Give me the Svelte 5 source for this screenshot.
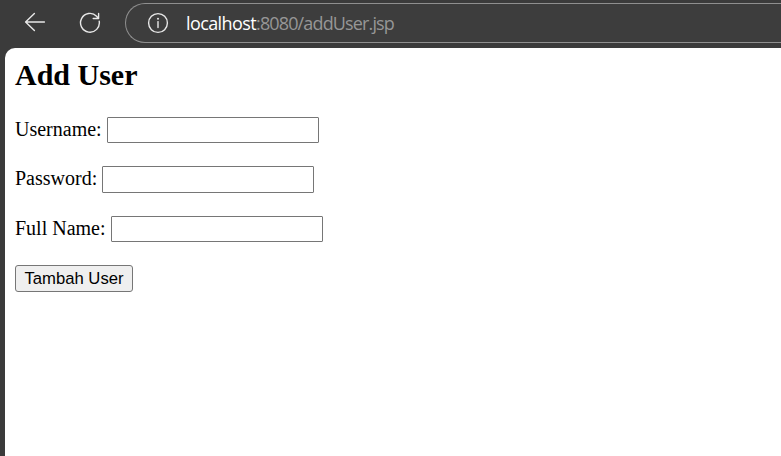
<script>
  const fields = [
    { id: 'username', label: 'Username:', type: 'text', height: 26, gap: 23 },
    { id: 'password', label: 'Password:', type: 'password', height: 27, gap: 23 },
    { id: 'fullname', label: 'Full Name:', type: 'text', height: 26, gap: 23 }
  ];
</script>

<div class="browser">
  <header class="toolbar">
    <svg class="back" width="22" height="20" viewBox="0 0 22 20" aria-label="Back">
      <path d="M10.4 1.6 1.6 10l8.8 8.4M1.8 10H20.4" />
    </svg>
    <svg class="reload" width="22" height="22" viewBox="0 0 22 22" aria-label="Refresh">
      <path d="M20.2 9.2A9.4 9.4 0 1 1 17.6 4.2L19.3 6.2M19.6 1.5v5h-5.4" />
    </svg>
    <div class="address">
      <svg width="22" height="22" viewBox="0 0 22 22" aria-label="Site information">
        <circle cx="11" cy="11" r="9.4" />
        <path d="M11 9.6v6" />
        <circle class="dot" cx="11" cy="6.8" r="1" />
      </svg>
      <div class="url"><span class="host">localhost</span><span class="path">:8080/addUser.jsp</span></div>
    </div>
  </header>
  <main>
    <h2>Add User</h2>
    <form onsubmit={(e) => e.preventDefault()}>
      {#each fields as f}
        <div class="row" style="height: {f.height}px; margin-bottom: {f.gap}px">
          <label for={f.id}>{f.label}</label>
          <input id={f.id} name={f.id} type={f.type} />
        </div>
      {/each}
      <button type="submit">Tambah User</button>
    </form>
  </main>
</div>

<style>
  :global(body) { margin: 0; }
  .browser {
    box-sizing: border-box;
    height: 456px;
    display: flex;
    flex-direction: column;
    padding-left: 5px;
    background: #3b3b3b;
    overflow: hidden;
  }
  .toolbar {
    height: 48px;
    flex: none;
    display: flex;
    align-items: flex-start;
  }
  svg {
    flex: none;
    fill: none;
    stroke: #e8e8e8;
    stroke-width: 1.4;
    stroke-linecap: round;
    stroke-linejoin: round;
  }
  .back { margin: 12px 0 0 19px; }
  .reload { margin: 12px 0 0 33px; }
  .address {
    box-sizing: border-box;
    flex: 1;
    height: 40px;
    margin: 3px 0 0 24px;
    padding-left: 21px;
    display: flex;
    align-items: center;
    border: 1px solid #8f8f8f;
    border-right: 0;
    border-radius: 20px 0 0 20px;
    background: #3d3d3d;
  }
  .dot { fill: #e8e8e8; stroke: none; }
  .url {
    margin-left: 17px;
    font: 18px/24px "Open Sans", "Noto Sans", sans-serif;
    white-space: nowrap;
  }
  .host { color: #fff; letter-spacing: -0.6px; }
  .path { color: #969696; letter-spacing: -0.86px; }
  main {
    flex: 1;
    box-sizing: border-box;
    padding: 10px;
    background: #fff;
    border-top-left-radius: 10px;
    font: 20px/23px "Liberation Serif", "Times New Roman", serif;
    color: #000;
  }
  h2 {
    margin: 0 0 25px;
    font-size: 30px;
    line-height: 34px;
    font-weight: bold;
  }
  form { display: flex; flex-direction: column; align-items: flex-start; }
  .row { display: flex; align-items: center; gap: 5px; }
  label { padding-bottom: 2px; }
  input {
    box-sizing: border-box;
    width: 212px;
    height: 100%;
    margin: 0;
    padding: 1px 3px;
    border: 1px solid #767676;
    border-radius: 1px;
    background: #fff;
  }
  button {
    box-sizing: border-box;
    width: 118px;
    height: 27px;
    margin: 0;
    padding: 0;
    border: 1px solid #767676;
    border-radius: 3px;
    background: #efefef;
    color: #000;
    font: 16.667px/23px "Liberation Sans", Arial, sans-serif;
    white-space: nowrap;
  }
</style>
